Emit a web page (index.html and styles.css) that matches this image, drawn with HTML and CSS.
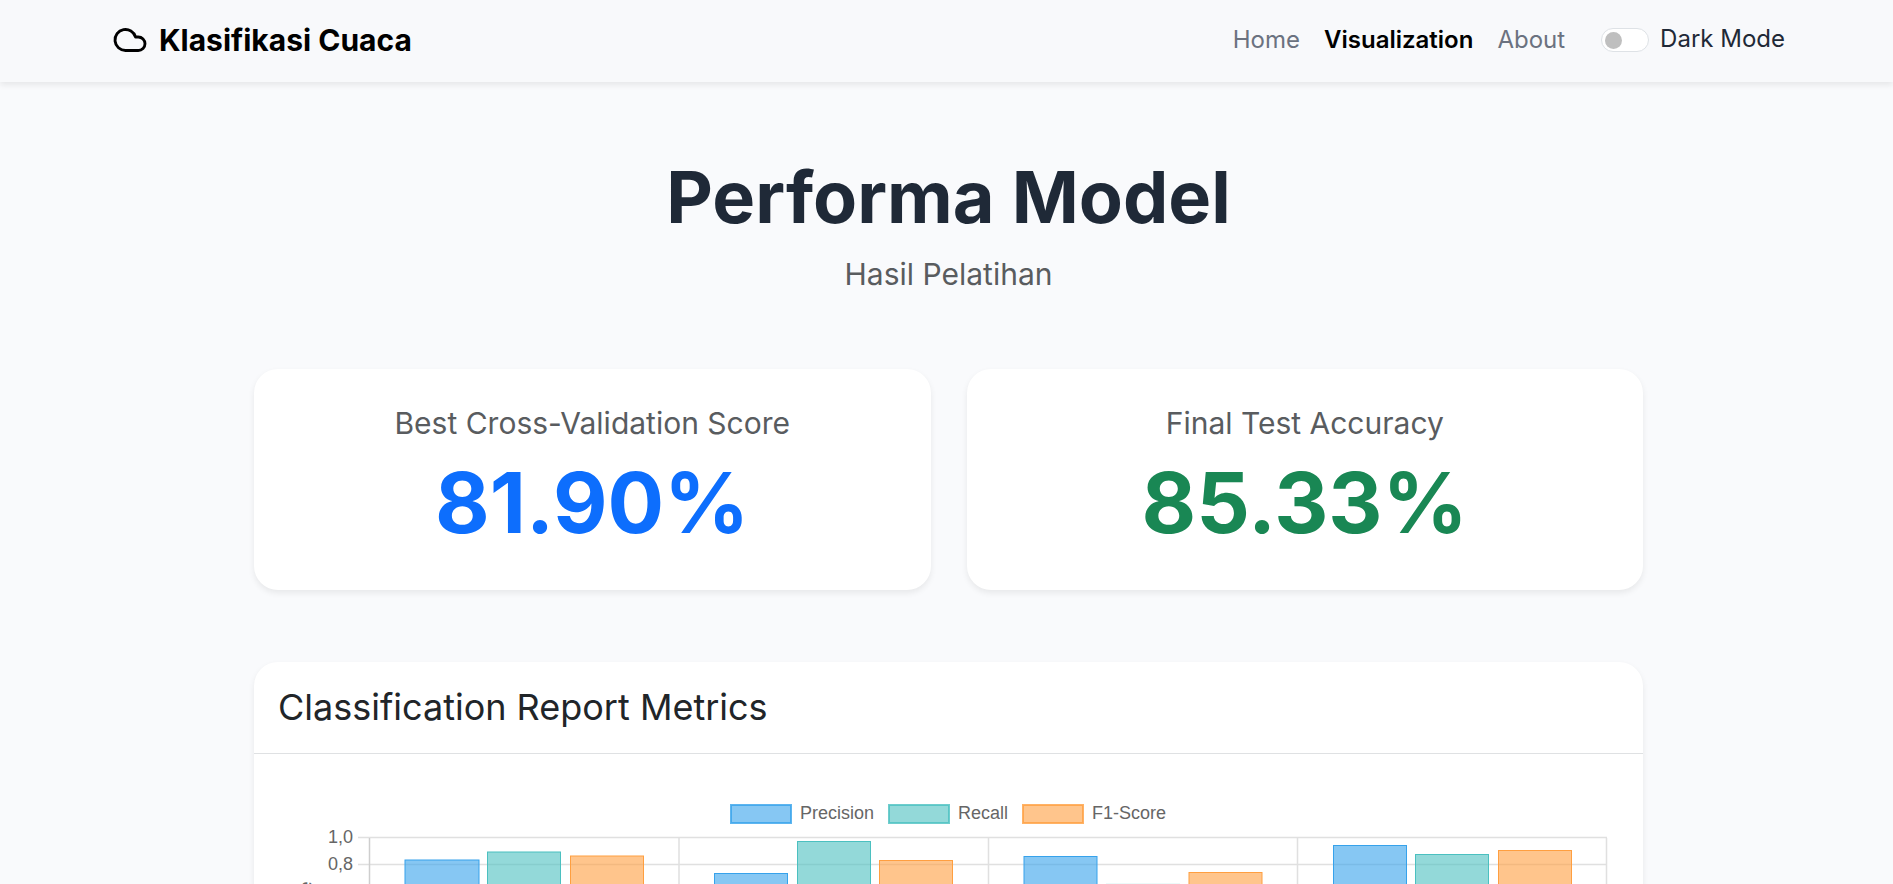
FILE: index.html
```html
<!DOCTYPE html>
<html lang="id">
<head>
<meta charset="utf-8">
<title>Klasifikasi Cuaca</title>
<link rel="stylesheet" href="styles.css">
</head>
<body>
<nav class="navbar">
  <a class="brand">
    <svg class="brand-icon" viewBox="0 0 24 24" fill="none" stroke="currentColor" stroke-width="1.9" stroke-linecap="round" stroke-linejoin="round"><path d="M17.5 19H9a7 7 0 1 1 6.71-9h1.79a4.5 4.5 0 1 1 0 9Z"/></svg>
    <span>Klasifikasi Cuaca</span>
  </a>
  <div class="nav-right">
    <a class="nav-link">Home</a>
    <a class="nav-link active">Visualization</a>
    <a class="nav-link">About</a>
    <label class="theme"><span class="switch"><span class="knob"></span></span><span class="theme-text">Dark Mode</span></label>
  </div>
</nav>
<main class="content">
  <header class="hero">
    <h1 class="title">Performa Model</h1>
    <p class="subtitle">Hasil Pelatihan</p>
  </header>
  <section class="scores">
    <div class="card score"><div class="score-label">Best Cross-Validation Score</div><div class="score-value blue">81.90%</div></div>
    <div class="card score"><div class="score-label">Final Test Accuracy</div><div class="score-value green">85.33%</div></div>
  </section>
  <section class="card report">
    <h2 class="report-title">Classification Report Metrics</h2>
    <svg class="chart" viewBox="254 754 1389 600">
      <g class="grid">
        <path d="M358 837.5H1607M358 864.5H1607M679 838V1200M988.5 838V1200M1297.5 838V1200M1606.5 838V1200"/>
        <path class="axis" d="M369.5 838V1200"/>
      </g>
      <g class="precision">
        <rect x="731" y="805" width="60" height="18" class="key"/>
        <rect x="405" y="860" width="74" height="300"/>
        <rect x="714.5" y="873.5" width="73" height="300"/>
        <rect x="1024" y="856.5" width="73" height="300"/>
        <rect x="1333.5" y="845.5" width="73" height="300"/>
      </g>
      <g class="recall">
        <rect x="889" y="805" width="60" height="18" class="key"/>
        <rect x="487.5" y="852" width="73" height="300"/>
        <rect x="797.5" y="841.5" width="73" height="300"/>
        <rect x="1106.5" y="884.4" width="73" height="300"/>
        <rect x="1415.5" y="854.5" width="73" height="300"/>
      </g>
      <g class="f1">
        <rect x="1023" y="805" width="60" height="18" class="key"/>
        <rect x="570.5" y="856" width="73" height="300"/>
        <rect x="879.5" y="860.5" width="73" height="300"/>
        <rect x="1189" y="872.5" width="73" height="300"/>
        <rect x="1498.5" y="850.5" width="73" height="300"/>
      </g>
      <g class="labels">
        <text x="800" y="819">Precision</text>
        <text x="958" y="819">Recall</text>
        <text x="1092" y="819">F1-Score</text>
        <text x="353" y="843" text-anchor="end">1,0</text>
        <text x="353" y="870" text-anchor="end">0,8</text>
        <text transform="translate(312 881.5) rotate(-90)" text-anchor="end">Score</text>
      </g>
    </svg>
  </section>
</main>
</body>
</html>
```
FILE: styles.css
```css
* { box-sizing: border-box; }
html { height: 884px; overflow: hidden; }
body { margin: 0; height: 884px; overflow: hidden; background: #f9fafc; color: #212529; font-family: Inter, sans-serif; font-size: 24px; line-height: 36px; }
.navbar { height: 82px; padding: 0 108px 2px 112px; display: flex; justify-content: space-between; align-items: center; background: #f8f9fb; box-shadow: 0 3px 6px rgba(0, 0, 0, .08); }
.brand { display: flex; align-items: center; gap: 11px; color: #000; font-size: 30px; font-weight: 700; }
.brand-icon { width: 36px; height: 36px; }
.nav-right { display: flex; align-items: center; gap: 24px; }
.nav-link { color: #6b7280; }
.nav-link.active { color: #000; font-weight: 600; }
.theme { display: flex; align-items: center; gap: 11px; margin-left: 12px; color: #1f2937; }
.theme-text { padding-bottom: 3px; }
.switch { display: flex; align-items: center; width: 48px; height: 24px; padding-left: 3px; border: 1px solid #dee2e6; border-radius: 12px; background: #fff; }
.knob { width: 17px; height: 17px; border-radius: 50%; background: #bfbfbf; }
.content { width: 1389px; margin: 0 auto 0 254px; padding-top: 72px; }
.hero { text-align: center; height: 215px; }
.title { margin: 0; font-size: 72px; line-height: 86px; font-weight: 700; color: #1f2937; }
.subtitle { margin: 12px 0 0; font-size: 30px; line-height: 45px; color: #595c5f; }
.scores { display: grid; grid-template-columns: 1fr 1fr; gap: 36px; }
.card { background: #fff; border-radius: 24px; box-shadow: 0 3px 6px rgba(0, 0, 0, .075); }
.score { height: 221px; padding-top: 36px; text-align: center; }
.score-label { font-size: 30px; line-height: 36px; color: #595c5f; }
.score-value { margin-top: 11px; font-size: 84px; line-height: 101px; font-weight: 700; }
.blue { color: #0d6efd; }
.green { color: #198754; }
.report { margin-top: 72px; height: 700px; }
.report-title { margin: 0; height: 92px; padding: 24px 24px 0; border-bottom: 1px solid #dfe1e3; font-size: 36px; line-height: 43px; font-weight: 400; }
.chart { display: block; width: 1389px; height: 600px; }
.grid path { fill: none; stroke: #e0e0e0; stroke-width: 1.5; }
.grid .axis { stroke: #cecece; }
.precision { fill: rgba(54, 162, 235, .6); stroke: #36a2eb; }
.recall { fill: rgba(75, 192, 192, .6); stroke: #4bc0c0; }
.f1 { fill: rgba(255, 159, 64, .6); stroke: #ff9f40; }
.key { stroke-width: 2; stroke-opacity: .8; }
.labels { font-family: "Liberation Sans", Arial, sans-serif; font-size: 18px; fill: #666; }
```
